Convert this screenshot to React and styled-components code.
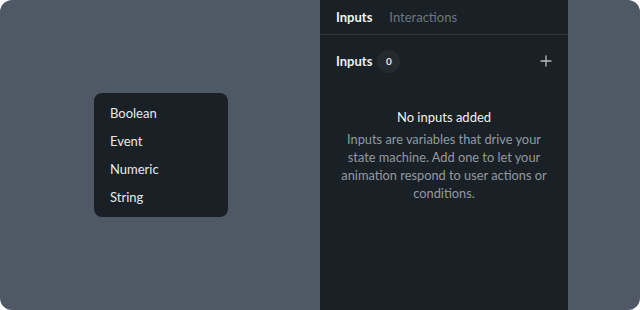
import React from "react";
import styled, { createGlobalStyle } from "styled-components";

const GlobalStyle = createGlobalStyle`
  html, body {
    margin: 0;
    padding: 0;
    background: #ffffff;
  }
  body {
    font-family: Lato, "Noto Sans", sans-serif;
    -webkit-font-smoothing: antialiased;
  }
`;

const Frame = styled.div`
  width: 640px;
  height: 310px;
  border-radius: 12px;
  overflow: hidden;
  background: #4f5965;
  display: grid;
  grid-template-columns: 320px 248px 72px;
`;

const Stage = styled.div`
  display: flex;
  align-items: center;
  padding-left: 94px;
`;

const Menu = styled.ul`
  list-style: none;
  margin: 0;
  padding: 6px 0;
  width: 134px;
  box-sizing: border-box;
  background: #1a2126;
  border-radius: 8px;
`;

const MenuItem = styled.li`
  height: 28px;
  display: flex;
  align-items: center;
  padding-left: 16px;
  font-size: 13px;
  color: #e6e8ea;
`;

const Panel = styled.section`
  background: #1a2126;
  display: flex;
  flex-direction: column;
`;

const Tabs = styled.div`
  display: flex;
  gap: 17px;
  height: 35px;
  padding: 0 16px 1px;
  align-items: center;
  border-bottom: 1px solid #2d353b;
  box-sizing: border-box;
`;

const Tab = styled.span`
  font-size: 13px;
  font-weight: ${(p) => (p.$active ? 700 : 400)};
  color: ${(p) => (p.$active ? "#f1f3f4" : "#6e767d")};
`;

const Header = styled.div`
  display: flex;
  align-items: center;
  height: 52px;
  padding: 0 14px 0 16px;
  box-sizing: border-box;
`;

const HeaderTitle = styled.span`
  font-size: 13px;
  font-weight: 700;
  color: #eceef0;
`;

const Badge = styled.span`
  width: 23px;
  height: 23px;
  border-radius: 50%;
  background: #232b31;
  color: #e6e8ea;
  font-size: 10px;
  font-weight: 700;
  display: inline-flex;
  align-items: center;
  justify-content: center;
  margin-left: 5px;
`;

const AddButton = styled.button`
  margin-left: auto;
  background: none;
  border: 0;
  padding: 0;
  width: 16px;
  height: 16px;
  display: flex;
  align-items: center;
  justify-content: center;
  color: #b8bdc2;
  cursor: pointer;
`;

const Empty = styled.div`
  padding: 22px 12px 0;
  text-align: center;
`;

const EmptyTitle = styled.div`
  font-size: 13px;
  color: #eef0f1;
  margin-bottom: 5px;
`;

const EmptyText = styled.p`
  margin: 0;
  font-size: 12.8px;
  line-height: 18px;
  color: #9299a0;
`;

const Gutter = styled.div``;

export default function App() {
  return (
    <>
      <GlobalStyle />
      <Frame>
        <Stage>
          <Menu>
            <MenuItem>Boolean</MenuItem>
            <MenuItem>Event</MenuItem>
            <MenuItem>Numeric</MenuItem>
            <MenuItem>String</MenuItem>
          </Menu>
        </Stage>
        <Panel>
          <Tabs>
            <Tab $active>Inputs</Tab>
            <Tab>Interactions</Tab>
          </Tabs>
          <Header>
            <HeaderTitle>Inputs</HeaderTitle>
            <Badge>0</Badge>
            <AddButton aria-label="Add input">
              <svg width="12" height="12" viewBox="0 0 12 12">
                <path d="M6 1v10M1 6h10" stroke="currentColor" strokeWidth="1.3" strokeLinecap="round" />
              </svg>
            </AddButton>
          </Header>
          <Empty>
            <EmptyTitle>No inputs added</EmptyTitle>
            <EmptyText>
              Inputs are variables that drive your state machine. Add one to let your
              animation respond to user actions or conditions.
            </EmptyText>
          </Empty>
        </Panel>
        <Gutter />
      </Frame>
    </>
  );
}
